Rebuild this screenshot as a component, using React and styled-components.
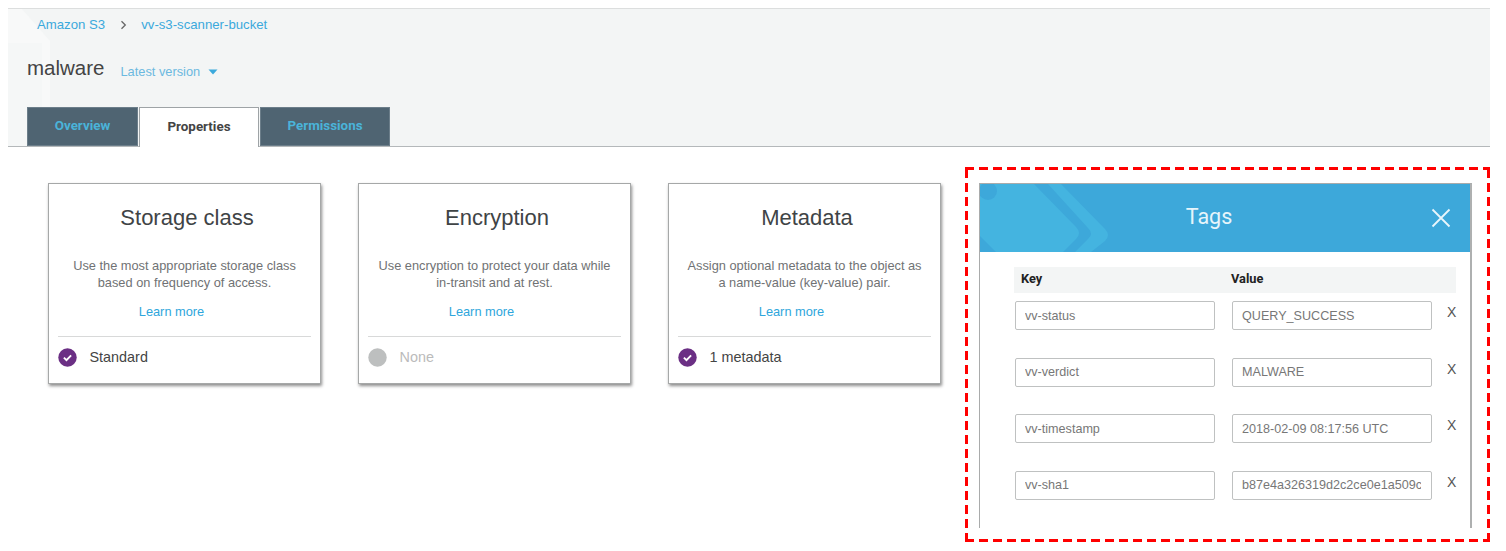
import styled, { createGlobalStyle } from "styled-components";

const cards = [
    { title: "Storage class", text: ["Use the most appropriate storage class", "based on frequency of access."], status: "Standard", on: true },
    { title: "Encryption", text: ["Use encryption to protect your data while", "in-transit and at rest."], status: "None", on: false },
    { title: "Metadata", text: ["Assign optional metadata to the object as", "a name-value (key-value) pair."], status: "1 metadata", on: true },
];

const tags = [
    { key: "vv-status", value: "QUERY_SUCCESS" },
    { key: "vv-verdict", value: "MALWARE" },
    { key: "vv-timestamp", value: "2018-02-09 08:17:56 UTC" },
    { key: "vv-sha1", value: "b87e4a326319d2c2ce0e1a509c" },
];

const App = () => {
    return (
        <Page>
            <GlobalStyle />
            <Header>
                <Watermark width="50" height="137" viewBox="0 0 50 137">
                    <path d="M0 0H14L42 32V137H0Z" fill="#f8f9f9" />
                    <path d="M0 34H34V137H0Z" fill="#f5f7f7" />
                </Watermark>
                <Breadcrumb>
                    <Crumb>Amazon S3</Crumb>
                    <Chevron width="7" height="10" viewBox="0 0 7 10">
                        <path d="M1.5 1.2L5.3 5L1.5 8.8" fill="none" stroke="#666" strokeWidth="1.3" />
                    </Chevron>
                    <Crumb>vv-s3-scanner-bucket</Crumb>
                </Breadcrumb>
                <TitleRow>
                    <ObjectName>malware</ObjectName>
                    <Version>Latest version</Version>
                    <Caret width="10" height="6" viewBox="0 0 10 6">
                        <path d="M0.5 0.5H9.5L5 5.5Z" fill="#3ba9dc" />
                    </Caret>
                </TitleRow>
                <Tabs>
                    <Tab $width={111}>Overview</Tab>
                    <Tab $width={120} $active>Properties</Tab>
                    <Tab $width={130}>Permissions</Tab>
                </Tabs>
            </Header>
            <Content>
                <Cards>
                    {cards.map(card => (
                        <Card key={card.title}>
                            <CardTitle>{card.title}</CardTitle>
                            <CardText>{card.text[0]}<br />{card.text[1]}</CardText>
                            <LearnMore>Learn more</LearnMore>
                            <Status $on={card.on}>
                                <StatusIcon width="19" height="19" viewBox="0 0 20 20">
                                    <circle cx="10" cy="10" r="9.7" fill={card.on ? "#6b2f84" : "#bdbfbf"} />
                                    {card.on && <path d="M6.2 10.2L8.9 12.8L13.8 7.8" fill="none" stroke="#fff" strokeWidth="2" />}
                                </StatusIcon>
                                {card.status}
                            </Status>
                        </Card>
                    ))}
                </Cards>
                <Highlight>
                    <TagsPanel>
                        <TagsHeader>
                            <HeaderArt width="135" height="68" viewBox="0 0 135 68">
                                <path d="M0 0H54L96 43Q102 49 96 55L83 68H16L0 52Z" fill="#44b4e0" />
                                <path d="M68 0H81L125 45Q131 51 125 57L111 68H95L108 55Q114 50 108 44Z" fill="#44b4e0" />
                                <circle cx="8" cy="7" r="9" fill="#3da8da" />
                            </HeaderArt>
                            <TagsTitle>Tags</TagsTitle>
                            <CloseIcon width="20" height="20" viewBox="0 0 20 20">
                                <path d="M1.5 1.5L18.5 18.5M18.5 1.5L1.5 18.5" stroke="#e9f6fc" strokeWidth="1.8" fill="none" />
                            </CloseIcon>
                        </TagsHeader>
                        <TagsBody>
                            <TagsHead>
                                <HeadKey>Key</HeadKey>
                                <span>Value</span>
                            </TagsHead>
                            <TagList>
                                {tags.map(tag => (
                                    <TagRow key={tag.key}>
                                        <TagInput readOnly value={tag.key} />
                                        <TagInput readOnly value={tag.value} />
                                        <RemoveTag>X</RemoveTag>
                                    </TagRow>
                                ))}
                            </TagList>
                        </TagsBody>
                    </TagsPanel>
                </Highlight>
            </Content>
        </Page>
    );
};

export default App;

const GlobalStyle = createGlobalStyle`
    body {
        margin: 0;
        background: #fff;
        font-family: "Liberation Sans", Arial, sans-serif;
    }
`

const Page = styled.div`
    width: 1506px;
    height: 551px;
    padding-top: 8px;
    box-sizing: border-box;
    overflow: hidden;
`

const Header = styled.header`
    position: relative;
    width: 1482px;
    height: 139px;
    margin-left: 8px;
    box-sizing: border-box;
    padding: 8px 0 0 19px;
    background: #f3f5f5;
    border-top: 1px solid #dcdede;
    border-bottom: 1px solid #b4b8ba;
`

const Watermark = styled.svg`
    position: absolute;
    left: 0;
    top: 0;
`

const Breadcrumb = styled.nav`
    position: relative;
    display: flex;
    align-items: center;
    height: 15px;
    margin-left: 10px;
    font-size: 13.2px;
    color: #3ba9dc;
`

const Crumb = styled.span`
    white-space: nowrap;
`

const Chevron = styled.svg`
    margin: 0 14px 0 15px;
`

const TitleRow = styled.div`
    position: relative;
    display: flex;
    align-items: baseline;
    height: 24px;
    margin-top: 24px;
`

const ObjectName = styled.h1`
    margin: 0 16px 0 0;
    font-size: 20.5px;
    font-weight: 400;
    line-height: 24px;
    color: #444;
`

const Version = styled.span`
    position: relative;
    top: 1px;
    font-size: 12.8px;
    color: #6bb9e0;
`

const Caret = styled.svg`
    margin-left: 8px;
`

const Tabs = styled.div`
    position: relative;
    display: flex;
    gap: 1px;
    margin-top: 27px;
    height: 39px;
`

const Tab = styled.div`
    display: flex;
    align-items: center;
    justify-content: center;
    box-sizing: border-box;
    width: ${props => props.$width}px;
    height: ${props => props.$active ? "40px" : "39px"};
    padding-bottom: 2px;
    font-family: Roboto, sans-serif;
    font-size: 13.4px;
    font-weight: 700;
    color: ${props => props.$active ? "#444" : "#4ab3d9"};
    background: ${props => props.$active ? "#fff" : "#4f6472"};
    border: 1px solid ${props => props.$active ? "#9ea3a6" : "#6c7e8a"};
    border-bottom: ${props => props.$active ? "none" : "1px solid #6c7e8a"};
`

const Content = styled.main`
    display: flex;
    align-items: flex-start;
    padding: 20px 0 0 48px;
`

const Cards = styled.div`
    display: flex;
    gap: 37px;
    margin-top: 16px;
`

const Card = styled.section`
    width: 273px;
    height: 201px;
    box-sizing: border-box;
    padding: 21px 9px 0;
    background: #fff;
    border: 1px solid #a6a8a8;
    box-shadow: 1px 2px 3px rgba(0, 0, 0, 0.45);
    text-align: center;
`

const CardTitle = styled.h2`
    margin: 0 0 0 5px;
    font-size: 22px;
    font-weight: 400;
    line-height: 26px;
    color: #3f4446;
`

const CardText = styled.p`
    margin: 27px 0 0;
    font-size: 12.8px;
    line-height: 16.5px;
    color: #707274;
`

const LearnMore = styled.a`
    display: block;
    margin: 13px 26px 0 0;
    font-size: 12.8px;
    line-height: 16px;
    color: #2ea6dc;
`

const Status = styled.div`
    display: flex;
    align-items: center;
    gap: 12.5px;
    margin-top: 16px;
    height: 40px;
    border-top: 1px solid #d8d9d9;
    font-size: 14.4px;
    color: ${props => props.$on ? "#444" : "#bbb"};
    padding-bottom: ${props => props.$on ? "3px" : "0"};
`

const StatusIcon = styled.svg`
    flex: none;
`

const Highlight = styled.div`
    box-sizing: border-box;
    width: 525px;
    height: 375px;
    margin-left: 24px;
    padding: 16px 0 0 14px;
    background-image:
        repeating-linear-gradient(90deg, #ff0000 0 9px, transparent 9px 14px),
        repeating-linear-gradient(90deg, #ff0000 0 9px, transparent 9px 14px),
        repeating-linear-gradient(0deg, #ff0000 0 9px, transparent 9px 14px),
        repeating-linear-gradient(0deg, #ff0000 0 9px, transparent 9px 14px);
    background-size: 100% 3px, 100% 3px, 3px 100%, 3px 100%;
    background-position: top, bottom, left, right;
    background-repeat: no-repeat;
`

const TagsPanel = styled.section`
    width: 493px;
    height: 345px;
    box-sizing: border-box;
    border-left: 1px solid #a9abab;
    border-right: 2px solid #aeb0b0;
    border-top: 1px solid #a9abab;
    background: #fff;
`

const TagsHeader = styled.div`
    position: relative;
    display: flex;
    align-items: center;
    justify-content: center;
    height: 68px;
    background: #3da8da;
    overflow: hidden;
`

const HeaderArt = styled.svg`
    position: absolute;
    left: 0;
    top: 0;
`

const TagsTitle = styled.h2`
    position: relative;
    margin: 0 32px 4px 0;
    font-family: Roboto, sans-serif;
    font-size: 21.5px;
    font-weight: 400;
    color: #e6f5fb;
`

const CloseIcon = styled.svg`
    position: absolute;
    right: 19px;
    top: 24px;
`

const TagsBody = styled.div`
    padding: 15px 0 0 34px;
`

const TagsHead = styled.div`
    display: flex;
    align-items: center;
    width: 442px;
    height: 26px;
    padding: 0 0 4px 7px;
    box-sizing: border-box;
    background: #f3f5f5;
    font-family: Roboto, sans-serif;
    font-size: 12.8px;
    font-weight: 700;
    color: #222;
`

const HeadKey = styled.span`
    width: 210px;
`

const TagList = styled.div`
    display: flex;
    flex-direction: column;
    gap: 27.5px;
    margin: 8px 0 0 1px;
`

const TagRow = styled.div`
    display: flex;
    gap: 17px;
    height: 29px;
`

const TagInput = styled.input`
    width: 200px;
    height: 29px;
    box-sizing: border-box;
    padding: 0 10px 0 9px;
    border: 1px solid #bfc1c1;
    border-radius: 2px;
    outline: none;
    background: #fff;
    font-family: "Liberation Sans", sans-serif;
    font-size: 12.6px;
    color: #777;
`

const RemoveTag = styled.span`
    margin: 3px 0 0 -2px;
    font-size: 14px;
    color: #555;
`
